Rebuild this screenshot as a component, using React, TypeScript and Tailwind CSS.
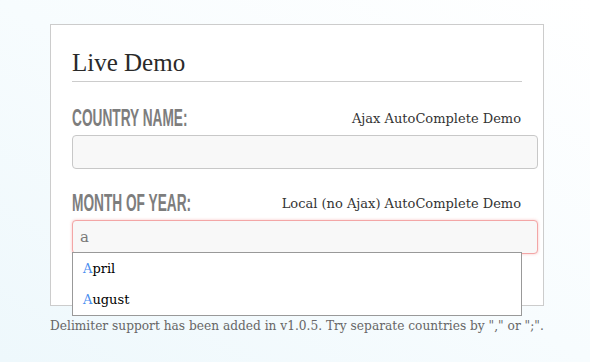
const serif = "font-['DejaVu_Serif',serif]";
const label =
  "inline-block origin-left scale-x-[0.57] whitespace-nowrap font-['Liberation_Sans',sans-serif] text-[24px] font-bold uppercase leading-none text-[#7d7d7d]";

function Field({
  title,
  hint,
  value,
  focused,
}: {
  title: string;
  hint: string;
  value?: string;
  focused?: boolean;
}) {
  return (
    <div>
      <div className="flex h-[24px] items-start justify-between pr-px">
        <span className={label}>{title}</span>
        <span className={`${serif} mt-[6px] text-[13px] leading-none text-[#333]`}>{hint}</span>
      </div>
      <div
        className={`mt-[5px] flex h-[34px] w-[466px] items-center rounded-[4px] border bg-[#f8f8f8] px-[7px] ${
          focused
            ? "border-[#f3a6a6] shadow-[0_0_3px_rgba(240,120,120,0.45)]"
            : "border-[#c8c8c8]"
        }`}
      >
        <span className={`${serif} text-[15px] text-[#777]`}>{value}</span>
      </div>
    </div>
  );
}

export default function App() {
  return (
    <div className="h-[362px] w-[590px] overflow-hidden bg-linear-to-tr from-[#eef8fc] via-[#f7fcfe] to-white pt-6">
      <div className="ml-[50px] w-[494px]">
        <div className="relative h-[282px] border border-[#cccccc] bg-white px-[21px] pt-[23px]">
          <h2
            className="border-b border-[#cccccc] pb-[3px] font-['Liberation_Serif',serif] text-[25px] leading-[30px] text-[#2a2a2a]"
          >
            Live Demo
          </h2>
          <div className="mt-[24px] flex flex-col gap-[22px]">
            <Field title="Country Name:" hint="Ajax AutoComplete Demo" />
            <div className="relative">
              <Field
                title="Month of Year:"
                hint="Local (no Ajax) AutoComplete Demo"
                value="a"
                focused
              />
              <ul className="absolute left-0 top-full z-10 -mt-[2px] w-[450px] border border-[#999] bg-white">
                {["April", "August"].map((m) => (
                  <li
                    key={m}
                    className={`${serif} h-[31px] px-[10px] text-[13px] leading-[31px] text-black`}
                  >
                    <span className="text-[#4a8ef0]">{m[0]}</span>
                    {m.slice(1)}
                  </li>
                ))}
              </ul>
            </div>
          </div>
        </div>
        <p className={`${serif} mt-[14px] whitespace-nowrap text-[12.2px] leading-none text-[#666]`}>
          Delimiter support has been added in v1.0.5. Try separate countries by "," or ";".
        </p>
      </div>
    </div>
  );
}
